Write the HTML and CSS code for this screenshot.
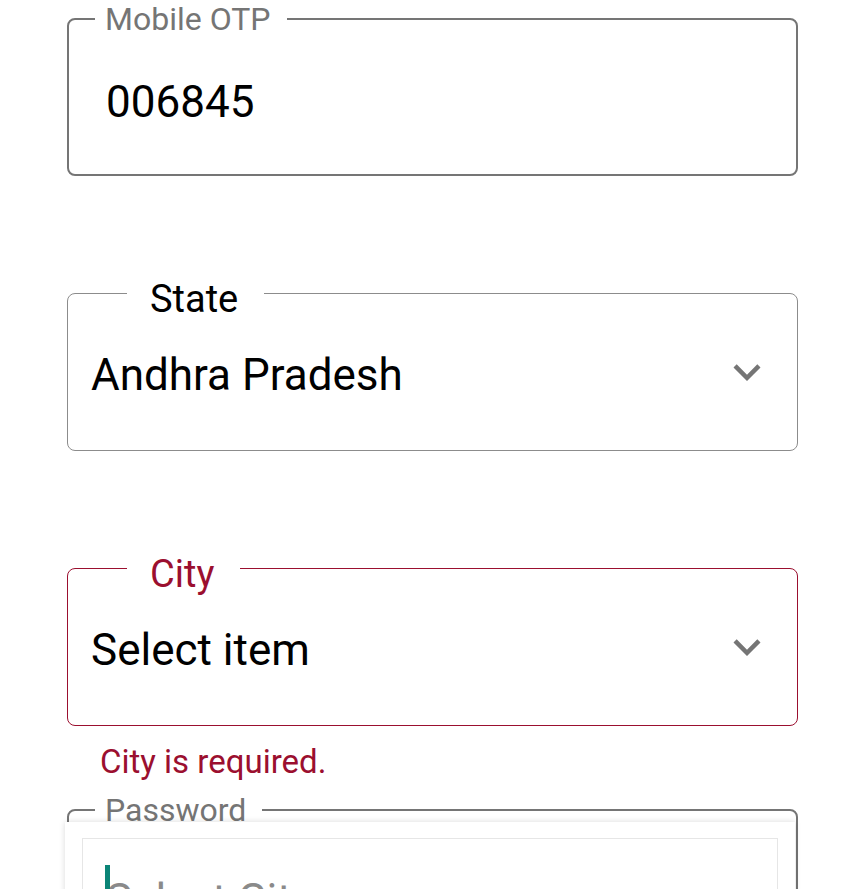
FILE: index.html
```html
<!DOCTYPE html>
<html>
<head>
  <title>Register</title>
  <link rel="stylesheet" href="styles.css">
</head>
<body>

<div class="form">
  <fieldset class="field outlined">
    <legend>Mobile OTP</legend>
    <div class="value">006845</div>
  </fieldset>

  <fieldset class="field picker">
    <legend>State</legend>
    <div class="picker-row">
      <span>Andhra Pradesh</span>
      <svg class="chevron" viewBox="0 0 24 24"><path d="M16.59 8.59L12 13.17 7.41 8.59 6 10l6 6 6-6z"/></svg>
    </div>
  </fieldset>

  <fieldset class="field picker invalid">
    <legend>City</legend>
    <div class="picker-row">
      <span>Select item</span>
      <svg class="chevron" viewBox="0 0 24 24"><path d="M16.59 8.59L12 13.17 7.41 8.59 6 10l6 6 6-6z"/></svg>
    </div>
  </fieldset>
  <div class="error">City is required.</div>

  <fieldset class="field outlined">
    <legend>Password</legend>
    <div class="value">&nbsp;</div>
  </fieldset>
</div>

<!-- city search popup -->
<div class="popup">
  <div class="search">
    <span class="caret"></span>
    <span class="placeholder">Select City</span>
  </div>
</div>

</body>
</html>
```

FILE: styles.css
```css
body {
  margin: 0;
  font-family: Roboto, "Noto Sans", sans-serif;
  background: #fff;
  color: #111;
  overflow: hidden;
}
.form {
  padding: 3px 0 40px 67px;
  width: 731px;
}
.field {
  margin: 0;
  padding: 0;
  min-width: 0;
  border-radius: 8px;
}
.outlined {
  border: 2px solid #757575;
}
.outlined legend {
  margin-left: 26px;
  padding: 0 16px 0 10px;
  font-size: 32px;
  line-height: 32px;
  color: #757575;
}
.value {
  padding: 41px 0 46px 37px;
  font-size: 44px;
  line-height: 52px;
  color: #000;
}
.picker {
  margin-top: 93px;
  border: 1px solid #8c8c8c;
}
.picker legend {
  margin-left: 59px;
  padding: 11px 26px 0 23px;
  font-size: 38px;
  line-height: 38px;
  color: #000;
}
.picker-row {
  display: flex;
  align-items: center;
  justify-content: space-between;
  height: 52px;
  margin-top: 31px;
  padding: 0 23px 49px 23px;
  font-size: 44px;
  line-height: 52px;
  color: #000;
}
.chevron {
  width: 54px;
  height: 54px;
  margin-top: -7px;
  fill: #757575;
}
.invalid {
  border-color: #9b0f2f;
}
.invalid legend {
  color: #9b0f2f;
}
.error {
  margin: 16px 0 12px 33px;
  font-size: 33px;
  line-height: 40px;
  color: #9b0f2f;
}
.popup {
  position: absolute;
  top: 822px;
  left: 65px;
  width: 730px;
  height: 120px;
  background: #fff;
  box-shadow: 0 0 6px rgba(0,0,0,0.15);
}
.search {
  position: relative;
  margin: 16px 0 0 17px;
  width: 696px;
  height: 100px;
  padding: 35px 0 0 23px;
  box-sizing: border-box;
  border: 1px solid #e6e6e6;
  font-size: 44px;
  line-height: 52px;
  color: #8a8a8a;
}
.caret {
  position: absolute;
  top: 26px;
  left: 22px;
  width: 5px;
  height: 52px;
  background: #0b8577;
}
```
